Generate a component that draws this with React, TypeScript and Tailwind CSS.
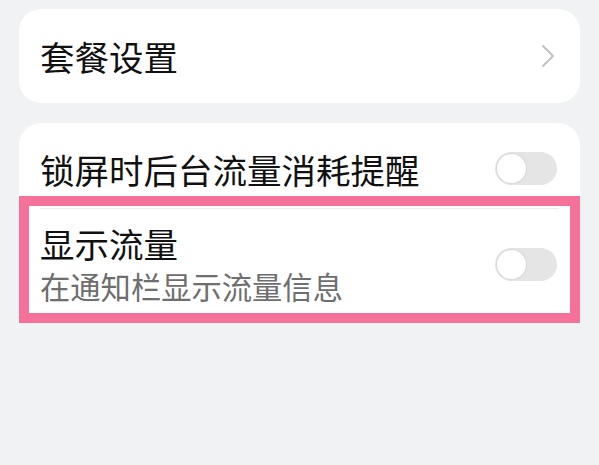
import React from "react";

function Toggle() {
  return (
    <div className="w-[62px] h-[33px] rounded-full bg-[#e5e5e6] flex items-center px-[2px] shrink-0">
      <div className="w-[29px] h-[29px] rounded-full bg-white shadow-[0_0_1px_1px_rgba(0,0,0,0.06)]" />
    </div>
  );
}

export default function App() {
  return (
    <div
      className="w-[599px] h-[465px] bg-[#f1f2f4] flex flex-col pt-[9px] px-[19px] gap-[20px] relative overflow-hidden"
      style={{ fontFamily: '"Noto Sans CJK SC", "Noto Sans", sans-serif' }}
    >
      <div className="h-[94px] bg-white rounded-[22px] flex items-center justify-between pl-[21px] pr-[25px]">
        <span className="text-[34.5px] leading-[40px] text-[#111111]">套餐设置</span>
        <svg width="14" height="24" viewBox="0 0 14 24" fill="none">
          <polyline points="2,2 12,12 2,22" stroke="#c2c2c4" strokeWidth="2" strokeLinecap="round" strokeLinejoin="round" />
        </svg>
      </div>

      <div className="bg-white rounded-[22px] flex flex-col">
        <div className="h-[85px] pt-[6px] flex items-center justify-between pl-[21px] pr-[23px]">
          <span className="text-[34.5px] leading-[40px] text-[#111111]">锁屏时后台流量消耗提醒</span>
          <Toggle />
        </div>
        <div className="mx-[21px] h-px bg-[#ececec]" />
        <div className="h-[110px] flex items-center justify-between pl-[21px] pr-[23px]">
          <div className="flex flex-col">
            <span className="text-[34.5px] leading-[44px] text-[#111111]">显示流量</span>
            <span className="text-[30.3px] leading-[42px] text-[#6e6e6e]">在通知栏显示流量信息</span>
          </div>
          <Toggle />
        </div>
      </div>

      <div className="absolute left-[19px] top-[196px] w-[561px] h-[127px] border-[10px] border-[#f6719a] pointer-events-none" />
    </div>
  );
}
